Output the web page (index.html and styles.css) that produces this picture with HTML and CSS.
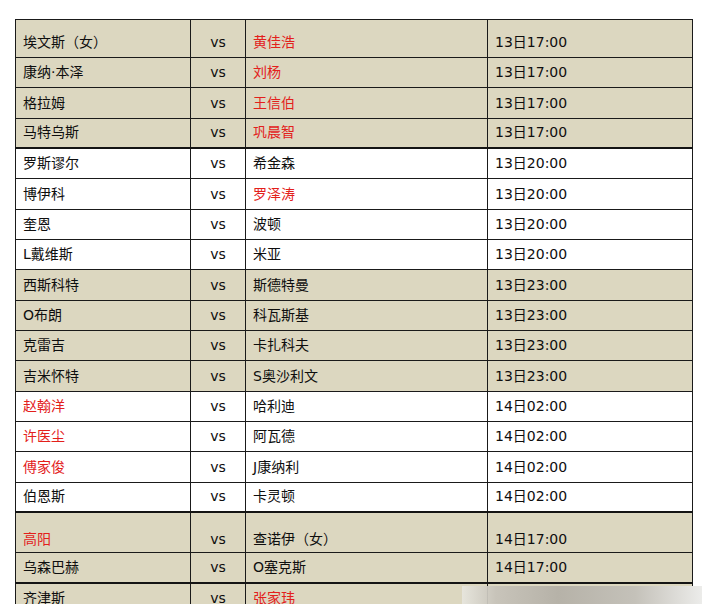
FILE: index.html
```html
<!DOCTYPE html>
<html lang="zh">
<head>
<meta charset="utf-8">
<title>赛程</title>
<link rel="stylesheet" href="styles.css">
</head>
<body>
<div class="page">
<table class="schedule">
<colgroup><col class="c1"><col class="c2"><col class="c3"><col class="c4"></colgroup>
<tbody>
<tr class="beige tall"><td>埃文斯（女）</td><td class="vs">vs</td><td class="red">黄佳浩</td><td>13日17:00</td></tr>
<tr class="beige"><td>康纳·本泽</td><td class="vs">vs</td><td class="red">刘杨</td><td>13日17:00</td></tr>
<tr class="beige"><td>格拉姆</td><td class="vs">vs</td><td class="red">王信伯</td><td>13日17:00</td></tr>
<tr class="beige"><td>马特乌斯</td><td class="vs">vs</td><td class="red">巩晨智</td><td>13日17:00</td></tr>
<tr class="white group"><td>罗斯谬尔</td><td class="vs">vs</td><td>希金森</td><td>13日20:00</td></tr>
<tr class="white"><td>博伊科</td><td class="vs">vs</td><td class="red">罗泽涛</td><td>13日20:00</td></tr>
<tr class="white"><td>奎恩</td><td class="vs">vs</td><td>波顿</td><td>13日20:00</td></tr>
<tr class="white"><td>L戴维斯</td><td class="vs">vs</td><td>米亚</td><td>13日20:00</td></tr>
<tr class="beige"><td>西斯科特</td><td class="vs">vs</td><td>斯德特曼</td><td>13日23:00</td></tr>
<tr class="beige"><td>O布朗</td><td class="vs">vs</td><td>科瓦斯基</td><td>13日23:00</td></tr>
<tr class="beige"><td>克雷吉</td><td class="vs">vs</td><td>卡扎科夫</td><td>13日23:00</td></tr>
<tr class="beige"><td>吉米怀特</td><td class="vs">vs</td><td>S奥沙利文</td><td>13日23:00</td></tr>
<tr class="white"><td class="red">赵翰洋</td><td class="vs">vs</td><td>哈利迪</td><td>14日02:00</td></tr>
<tr class="white"><td class="red">许医尘</td><td class="vs">vs</td><td>阿瓦德</td><td>14日02:00</td></tr>
<tr class="white"><td class="red">傅家俊</td><td class="vs">vs</td><td>J康纳利</td><td>14日02:00</td></tr>
<tr class="white"><td>伯恩斯</td><td class="vs">vs</td><td>卡灵顿</td><td>14日02:00</td></tr>
<tr class="beige group taller"><td class="red">高阳</td><td class="vs">vs</td><td>查诺伊（女）</td><td>14日17:00</td></tr>
<tr class="beige"><td>乌森巴赫</td><td class="vs">vs</td><td>O塞克斯</td><td>14日17:00</td></tr>
<tr class="beige group"><td>齐津斯</td><td class="vs">vs</td><td class="red">张家玮</td><td>14日17:00</td></tr>
</tbody>
</table>
<div class="fade"></div>
</div>
</body>
</html>
```

FILE: styles.css
```css
html, body {
  margin: 0;
  padding: 0;
  background: #ffffff;
}

.page {
  position: relative;
  height: 604px;
  overflow: hidden;
  padding: 19px 0 0 15px;
  box-sizing: border-box;
  font-family: "DejaVu Sans", "Noto Sans CJK SC", sans-serif;
  font-size: 14px;
  color: #0e0e0e;
}

.schedule {
  border-collapse: collapse;
  table-layout: fixed;
  width: 677px;
}

.c1 { width: 175px; }
.c2 { width: 55px; }
.c3 { width: 242px; }
.c4 { width: 205px; }

.schedule td {
  border: 1px solid #1a1a1a;
  height: 30.33px;
  padding: 0 0 5px 7px;
  line-height: 20px;
  vertical-align: bottom;
  white-space: nowrap;
  box-sizing: border-box;
}

.schedule td.vs {
  text-align: center;
  padding-left: 0;
}

.schedule td.red {
  color: #e3201b;
}

.beige td {
  background: #dcd7c0;
}

.white td {
  background: #ffffff;
}

.tall td {
  height: 38px;
}

.taller td {
  height: 40.5px;
  padding-bottom: 3px;
}

.group td {
  border-top: 2px solid #141414;
}

.fade {
  position: absolute;
  left: 462px;
  top: 586px;
  width: 240px;
  height: 18px;
  background: linear-gradient(90deg, rgba(235,235,232,0.7) 0%, rgba(200,196,186,1) 14%, rgba(182,178,168,1) 40%, rgba(196,193,185,1) 72%, rgba(236,236,234,1) 100%);
}
```
